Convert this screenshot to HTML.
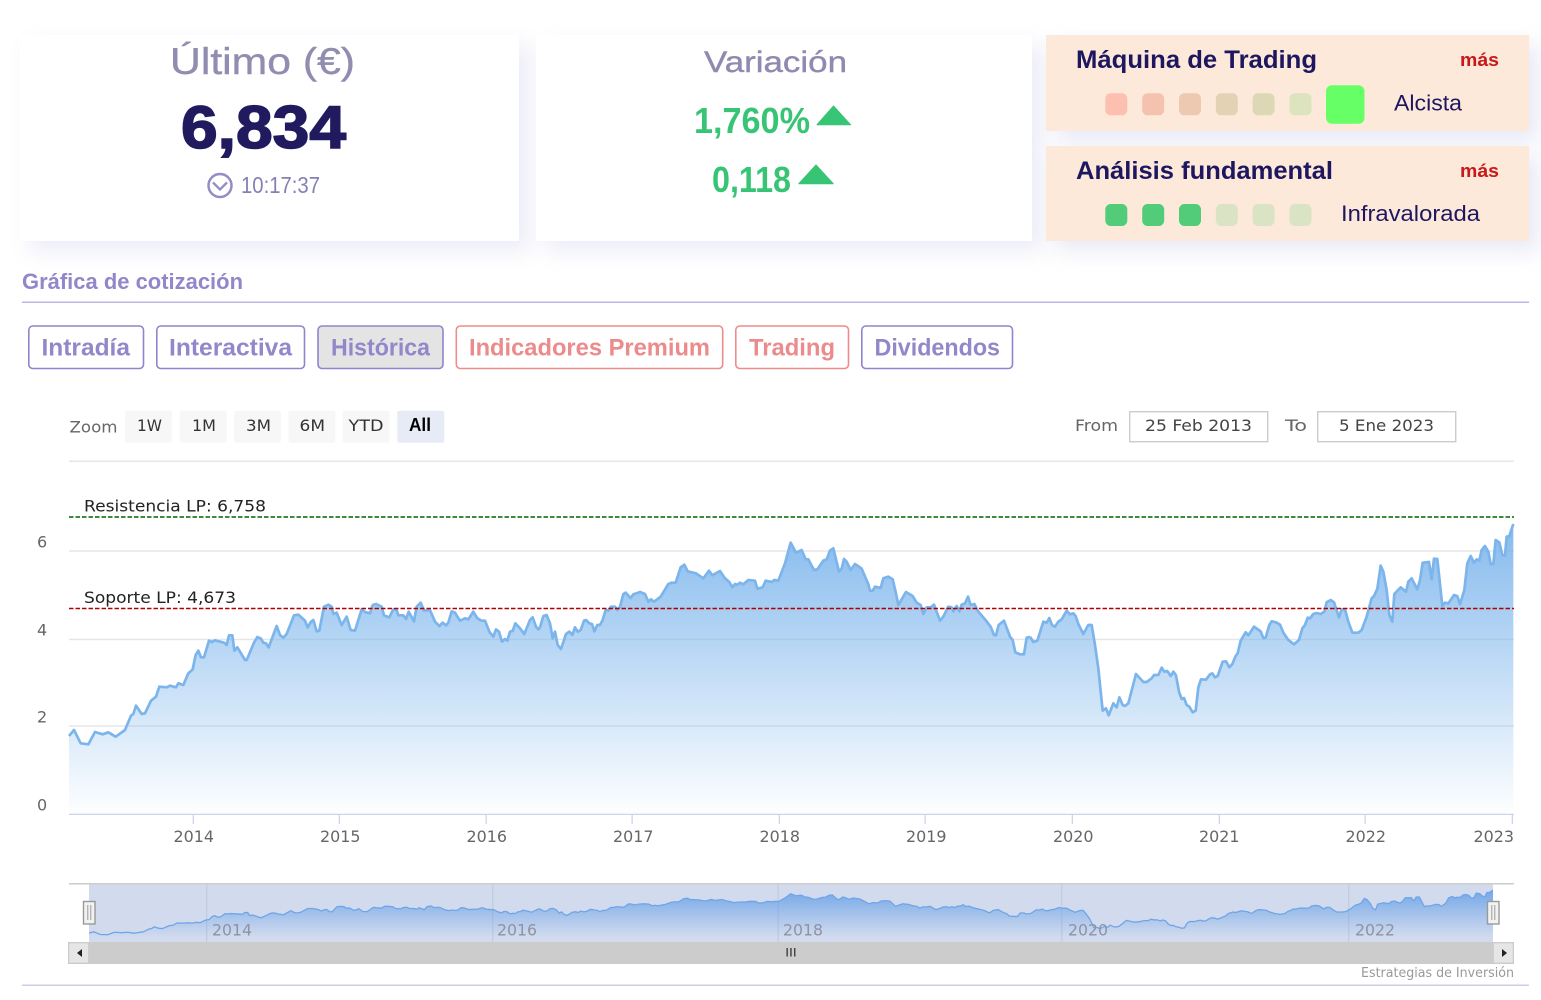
<!DOCTYPE html>
<html lang="es"><head><meta charset="utf-8"><title>Gráfica de cotización</title>
<style>
html,body{margin:0;padding:0;background:#fff;width:1541px;height:1000px;overflow:hidden}
.c{position:absolute;background:#fff;box-shadow:10px 10px 20px rgba(125,125,205,.15)}
.p{position:absolute;left:1046px;width:483px;background:#fde9d9;box-shadow:10px 10px 20px rgba(125,125,205,.17)}
svg{position:absolute;left:0;top:0}
.h{font-family:"Liberation Sans",sans-serif}
.d{font-family:"DejaVu Sans",sans-serif;font-size:16px}
</style></head><body>
<div class="c" style="left:20px;top:35px;width:499px;height:206px"></div>
<div class="c" style="left:536px;top:35px;width:496px;height:206px"></div>
<div class="p" style="top:35px;height:96px"></div>
<div class="p" style="top:146px;height:95px"></div>
<svg width="1541" height="1000" viewBox="0 0 1541 1000" xmlns="http://www.w3.org/2000/svg">
<defs>
<linearGradient id="gA" gradientUnits="userSpaceOnUse" x1="0" x2="0" y1="130" y2="985"><stop offset="0" stop-color="#7cb5ec" stop-opacity=".9"/><stop offset="1" stop-color="#7cb5ec" stop-opacity="0"/></linearGradient>
<linearGradient id="gB" gradientUnits="userSpaceOnUse" x1="0" x2="0" y1="100" y2="800"><stop offset="0" stop-color="#5c9ae6" stop-opacity=".8"/><stop offset="1" stop-color="#5c9ae6" stop-opacity="0"/></linearGradient>
<clipPath id="nc"><rect x="89" y="884" width="1404" height="58"/></clipPath>
<g id="fs">
<polygon transform="translate(50,490) scale(.33333)" points="57,973 57,738 72,720 92,760 115,763 135,726 158,733 175,727 197,740 225,720 243,677 250,672 258,647 275,672 285,670 303,632 318,620 328,590 350,592 360,587 378,592 385,580 400,585 415,550 428,538 437,495 445,482 453,502 462,502 477,452 485,456 495,451 522,458 530,465 537,436 547,436 553,482 562,472 585,510 590,510 612,458 622,441 632,445 640,458 648,460 656,472 680,408 690,435 700,443 710,432 732,376 745,374 765,392 773,412 783,395 790,390 800,424 808,422 822,350 835,344 845,350 850,372 860,368 875,405 890,380 902,420 915,422 935,358 945,366 960,370 968,345 978,342 995,350 1002,376 1018,382 1030,358 1040,360 1045,376 1060,376 1068,387 1076,365 1092,394 1100,350 1112,338 1122,362 1140,360 1155,395 1168,408 1178,398 1188,406 1195,398 1205,364 1215,368 1230,392 1245,385 1255,388 1270,365 1282,385 1295,392 1305,392 1318,425 1330,440 1338,418 1347,425 1356,455 1365,447 1372,452 1380,425 1388,423 1396,400 1410,415 1423,432 1440,390 1448,382 1458,410 1465,418 1470,412 1470,973"/>
<polygon transform="translate(540,490) scale(.33333)" points="0,973 0,412 10,378 20,375 30,400 38,445 45,425 53,465 63,477 78,432 88,425 97,435 105,412 113,425 122,420 132,392 138,390 148,400 156,402 163,424 172,405 180,405 188,390 197,360 205,362 213,350 225,350 232,360 240,350 250,312 257,308 272,324 280,313 300,306 315,312 325,335 333,328 342,335 362,320 385,282 395,278 407,278 422,232 433,224 443,244 468,250 490,265 507,242 517,256 540,243 555,265 568,276 577,292 585,282 592,284 600,278 610,283 625,270 645,272 652,296 668,292 677,272 695,276 703,270 715,272 735,220 752,158 768,188 785,180 797,208 805,208 822,240 832,238 850,212 860,208 870,182 880,175 897,245 905,236 912,207 920,215 932,240 945,222 965,236 985,283 990,302 998,302 1005,290 1022,294 1030,265 1045,260 1058,268 1068,310 1075,345 1085,328 1098,306 1118,318 1130,338 1142,345 1150,372 1160,352 1172,352 1182,344 1200,392 1210,380 1225,350 1235,352 1240,364 1250,348 1258,364 1265,344 1275,340 1284,320 1292,345 1303,342 1315,365 1335,388 1352,410 1362,435 1368,436 1376,405 1392,392 1410,440 1418,450 1426,487 1440,493 1452,493 1460,443 1470,441 1470,973"/>
<polygon transform="translate(1030,490) scale(.33333)" points="0,973 0,440 10,456 22,452 40,395 50,398 58,384 66,405 75,410 85,395 95,388 110,362 120,373 130,370 137,378 145,402 160,432 175,405 185,405 195,465 205,535 218,662 228,655 236,676 250,640 260,652 268,622 278,645 285,648 295,640 318,552 340,576 350,576 365,565 372,555 385,555 395,533 403,545 412,543 422,558 430,545 438,556 447,605 455,627 462,624 470,645 478,650 488,667 497,662 505,592 513,568 528,569 540,553 547,550 555,562 563,558 578,515 588,514 598,532 607,522 617,498 623,490 632,452 647,427 655,436 672,410 692,424 700,444 707,443 718,405 725,394 738,397 750,404 760,428 775,450 792,463 807,450 817,415 825,405 833,383 840,385 850,372 860,369 872,372 883,365 890,337 902,330 912,337 927,382 935,358 945,358 955,395 967,428 985,428 995,420 1010,380 1025,325 1032,318 1042,296 1052,227 1060,245 1070,300 1078,375 1087,395 1093,312 1112,292 1128,305 1135,275 1145,265 1162,298 1170,270 1178,218 1197,216 1205,268 1212,206 1222,207 1237,348 1245,338 1255,340 1272,315 1282,318 1290,343 1303,300 1312,220 1322,198 1332,218 1340,208 1348,212 1355,180 1365,168 1375,185 1382,222 1390,222 1397,150 1408,157 1417,195 1425,197 1430,140 1438,138 1450,102 1450,973"/>
</g>
<g id="ls" fill="none" stroke-linejoin="round">
<polyline vector-effect="non-scaling-stroke" transform="translate(50,490) scale(.33333)" points="57,738 72,720 92,760 115,763 135,726 158,733 175,727 197,740 225,720 243,677 250,672 258,647 275,672 285,670 303,632 318,620 328,590 350,592 360,587 378,592 385,580 400,585 415,550 428,538 437,495 445,482 453,502 462,502 477,452 485,456 495,451 522,458 530,465 537,436 547,436 553,482 562,472 585,510 590,510 612,458 622,441 632,445 640,458 648,460 656,472 680,408 690,435 700,443 710,432 732,376 745,374 765,392 773,412 783,395 790,390 800,424 808,422 822,350 835,344 845,350 850,372 860,368 875,405 890,380 902,420 915,422 935,358 945,366 960,370 968,345 978,342 995,350 1002,376 1018,382 1030,358 1040,360 1045,376 1060,376 1068,387 1076,365 1092,394 1100,350 1112,338 1122,362 1140,360 1155,395 1168,408 1178,398 1188,406 1195,398 1205,364 1215,368 1230,392 1245,385 1255,388 1270,365 1282,385 1295,392 1305,392 1318,425 1330,440 1338,418 1347,425 1356,455 1365,447 1372,452 1380,425 1388,423 1396,400 1410,415 1423,432 1440,390 1448,382 1458,410 1465,418 1470,412"/>
<polyline vector-effect="non-scaling-stroke" transform="translate(540,490) scale(.33333)" points="0,412 10,378 20,375 30,400 38,445 45,425 53,465 63,477 78,432 88,425 97,435 105,412 113,425 122,420 132,392 138,390 148,400 156,402 163,424 172,405 180,405 188,390 197,360 205,362 213,350 225,350 232,360 240,350 250,312 257,308 272,324 280,313 300,306 315,312 325,335 333,328 342,335 362,320 385,282 395,278 407,278 422,232 433,224 443,244 468,250 490,265 507,242 517,256 540,243 555,265 568,276 577,292 585,282 592,284 600,278 610,283 625,270 645,272 652,296 668,292 677,272 695,276 703,270 715,272 735,220 752,158 768,188 785,180 797,208 805,208 822,240 832,238 850,212 860,208 870,182 880,175 897,245 905,236 912,207 920,215 932,240 945,222 965,236 985,283 990,302 998,302 1005,290 1022,294 1030,265 1045,260 1058,268 1068,310 1075,345 1085,328 1098,306 1118,318 1130,338 1142,345 1150,372 1160,352 1172,352 1182,344 1200,392 1210,380 1225,350 1235,352 1240,364 1250,348 1258,364 1265,344 1275,340 1284,320 1292,345 1303,342 1315,365 1335,388 1352,410 1362,435 1368,436 1376,405 1392,392 1410,440 1418,450 1426,487 1440,493 1452,493 1460,443 1470,441"/>
<polyline vector-effect="non-scaling-stroke" transform="translate(1030,490) scale(.33333)" points="0,440 10,456 22,452 40,395 50,398 58,384 66,405 75,410 85,395 95,388 110,362 120,373 130,370 137,378 145,402 160,432 175,405 185,405 195,465 205,535 218,662 228,655 236,676 250,640 260,652 268,622 278,645 285,648 295,640 318,552 340,576 350,576 365,565 372,555 385,555 395,533 403,545 412,543 422,558 430,545 438,556 447,605 455,627 462,624 470,645 478,650 488,667 497,662 505,592 513,568 528,569 540,553 547,550 555,562 563,558 578,515 588,514 598,532 607,522 617,498 623,490 632,452 647,427 655,436 672,410 692,424 700,444 707,443 718,405 725,394 738,397 750,404 760,428 775,450 792,463 807,450 817,415 825,405 833,383 840,385 850,372 860,369 872,372 883,365 890,337 902,330 912,337 927,382 935,358 945,358 955,395 967,428 985,428 995,420 1010,380 1025,325 1032,318 1042,296 1052,227 1060,245 1070,300 1078,375 1087,395 1093,312 1112,292 1128,305 1135,275 1145,265 1162,298 1170,270 1178,218 1197,216 1205,268 1212,206 1222,207 1237,348 1245,338 1255,340 1272,315 1282,318 1290,343 1303,300 1312,220 1322,198 1332,218 1340,208 1348,212 1355,180 1365,168 1375,185 1382,222 1390,222 1397,150 1408,157 1417,195 1425,197 1430,140 1438,138 1450,102"/>
</g>
</defs>

<!-- top cards -->
<text class="h" x="170" y="74" font-size="37" fill="#918db0" stroke="#918db0" stroke-width=".4" textLength="185" lengthAdjust="spacingAndGlyphs">Último (€)</text>
<text class="h" x="181" y="148" font-size="60" font-weight="700" fill="#211a5e" stroke="#211a5e" stroke-width="1.600" textLength="165" lengthAdjust="spacingAndGlyphs">6,834</text>
<circle cx="220" cy="185.500" r="11.500" fill="none" stroke="#938dc6" stroke-width="2.500"/>
<path d="M213 182.500 L220 189.500 L227 182.500" fill="none" stroke="#938dc6" stroke-width="2.300"/>
<text class="h" x="241" y="193" font-size="23" fill="#8580b4" textLength="79" lengthAdjust="spacingAndGlyphs">10:17:37</text>

<text class="h" x="704" y="72" font-size="30" fill="#8f8bb0" stroke="#8f8bb0" stroke-width=".4" textLength="143" lengthAdjust="spacingAndGlyphs">Variación</text>
<text class="h" x="694" y="133" font-size="36" font-weight="700" fill="#37c575" textLength="116" lengthAdjust="spacingAndGlyphs">1,760%</text>
<polygon points="833.500,106 850.500,124.700 817,124.700" fill="#37c575" stroke="#37c575" stroke-width="1" stroke-linejoin="round"/>
<text class="h" x="712" y="192" font-size="36" font-weight="700" fill="#37c575" textLength="79" lengthAdjust="spacingAndGlyphs">0,118</text>
<polygon points="816,165 833.300,183.700 798.800,183.700" fill="#37c575" stroke="#37c575" stroke-width="1" stroke-linejoin="round"/>

<!-- right panels -->
<g class="h" font-size="25" font-weight="700" fill="#1d1760">
<text x="1076" y="68" textLength="241" lengthAdjust="spacingAndGlyphs">Máquina de Trading</text>
<text x="1076" y="179" textLength="257" lengthAdjust="spacingAndGlyphs">Análisis fundamental</text>
</g>
<g class="h" font-size="18" font-weight="700" fill="#c81818">
<text x="1460" y="66" textLength="39" lengthAdjust="spacingAndGlyphs">más</text>
<text x="1460" y="177" textLength="39" lengthAdjust="spacingAndGlyphs">más</text>
</g>
<g>
<rect x="1105.300" y="93.300" width="22" height="22" rx="5.500" fill="#fdc0b0"/>
<rect x="1142.200" y="93.300" width="22" height="22" rx="5.500" fill="#f6c2b0"/>
<rect x="1179" y="93.300" width="22" height="22" rx="5.500" fill="#ecc9b0"/>
<rect x="1215.800" y="93.300" width="22" height="22" rx="5.500" fill="#e4d2b5"/>
<rect x="1252.600" y="93.300" width="22" height="22" rx="5.500" fill="#dcd8b5"/>
<rect x="1289.500" y="93.300" width="22" height="22" rx="5.500" fill="#dce3bd"/>
<rect x="1326" y="85.300" width="38.500" height="38.500" rx="6" fill="#66ff66"/>
<rect x="1105.300" y="204" width="22" height="22" rx="5.500" fill="#52cc79"/>
<rect x="1142.200" y="204" width="22" height="22" rx="5.500" fill="#52cc79"/>
<rect x="1179" y="204" width="22" height="22" rx="5.500" fill="#52cc79"/>
<rect x="1215.800" y="204" width="22" height="22" rx="5.500" fill="#dbe3c5"/>
<rect x="1252.600" y="204" width="22" height="22" rx="5.500" fill="#dbe3c5"/>
<rect x="1289.500" y="204" width="22" height="22" rx="5.500" fill="#dbe3c5"/>
</g>
<g class="h" font-size="22" fill="#1d1760">
<text x="1394" y="110.500" textLength="68" lengthAdjust="spacingAndGlyphs">Alcista</text>
<text x="1341" y="221" textLength="139" lengthAdjust="spacingAndGlyphs">Infravalorada</text>
</g>

<!-- section -->
<text class="h" x="22" y="289" font-size="22" font-weight="700" fill="#9187c9" textLength="221" lengthAdjust="spacingAndGlyphs">Gráfica de cotización</text>
<rect x="22" y="301.500" width="1507" height="1.500" fill="#bcb6e4"/>
<g fill="none" stroke-width="1.600">
<rect x="28.800" y="326" width="114.700" height="42.500" rx="4" stroke="#8f85cc"/>
<rect x="156.800" y="326" width="147.700" height="42.500" rx="4" stroke="#8f85cc"/>
<rect x="318" y="326" width="125" height="42.500" rx="4" stroke="#8f85cc" fill="#e4e4e4"/>
<rect x="456.300" y="326" width="266.400" height="42.500" rx="4" stroke="#ee8c8c"/>
<rect x="735.800" y="326" width="112.700" height="42.500" rx="4" stroke="#ee8c8c"/>
<rect x="861.800" y="326" width="150.700" height="42.500" rx="4" stroke="#8f85cc"/>
</g>
<g class="h" font-size="24" font-weight="700" fill="#9187c9">
<text x="41.500" y="355.500" textLength="88.500" lengthAdjust="spacingAndGlyphs">Intradía</text>
<text x="169" y="355.500" textLength="123" lengthAdjust="spacingAndGlyphs">Interactiva</text>
<text x="331" y="355.500" textLength="99" lengthAdjust="spacingAndGlyphs">Histórica</text>
<text x="874.500" y="355.500" textLength="125.500" lengthAdjust="spacingAndGlyphs">Dividendos</text>
</g>
<g class="h" font-size="24" font-weight="700" fill="#ec8b8b">
<text x="469" y="355.500" textLength="241" lengthAdjust="spacingAndGlyphs">Indicadores Premium</text>
<text x="749" y="355.500" textLength="86" lengthAdjust="spacingAndGlyphs">Trading</text>
</g>

<!-- range selector -->
<text class="d" x="69.500" y="432.500" fill="#666" textLength="48" lengthAdjust="spacingAndGlyphs">Zoom</text>
<g fill="#f7f7f7">
<rect x="125" y="410.700" width="47" height="32" rx="2.500"/>
<rect x="179.700" y="410.700" width="47" height="32" rx="2.500"/>
<rect x="234" y="410.700" width="47" height="32" rx="2.500"/>
<rect x="288.300" y="410.700" width="47" height="32" rx="2.500"/>
<rect x="342.700" y="410.700" width="47" height="32" rx="2.500"/>
<rect x="397.300" y="410.700" width="47" height="32" rx="2.500" fill="#e6ebf5"/>
</g>
<g class="d" fill="#333">
<text x="137" y="431" textLength="25" lengthAdjust="spacingAndGlyphs">1W</text>
<text x="192" y="431" textLength="24" lengthAdjust="spacingAndGlyphs">1M</text>
<text x="246" y="431" textLength="25" lengthAdjust="spacingAndGlyphs">3M</text>
<text x="299.500" y="431" textLength="25.500" lengthAdjust="spacingAndGlyphs">6M</text>
<text x="348.500" y="431" textLength="35" lengthAdjust="spacingAndGlyphs">YTD</text>
</g>
<text class="h" x="409" y="431" font-size="18" font-weight="700" fill="#000" textLength="22" lengthAdjust="spacingAndGlyphs">All</text>
<text class="d" x="1075" y="431" fill="#666" textLength="43" lengthAdjust="spacingAndGlyphs">From</text>
<text class="d" x="1285" y="431" fill="#666" textLength="22" lengthAdjust="spacingAndGlyphs">To</text>
<rect x="1129.700" y="411.700" width="138" height="30" fill="#fff" stroke="#ccc" stroke-width="1.400"/>
<rect x="1317.700" y="411.700" width="138" height="30" fill="#fff" stroke="#ccc" stroke-width="1.400"/>
<text class="d" x="1145" y="431" fill="#444" textLength="107" lengthAdjust="spacingAndGlyphs">25 Feb 2013</text>
<text class="d" x="1339" y="431" fill="#444" textLength="95" lengthAdjust="spacingAndGlyphs">5 Ene 2023</text>
<rect x="69" y="460.500" width="1445" height="1.500" fill="#e6e6e6"/>

<!-- main chart -->
<g fill="#e6e6e6">
<rect x="69" y="550.300" width="1445" height="1.500"/>
<rect x="69" y="638.700" width="1445" height="1.500"/>
<rect x="69" y="725.300" width="1445" height="1.500"/>
</g>
<use href="#fs" fill="url(#gA)"/>
<use href="#ls" stroke="#7cb5ec" stroke-width="2.700"/>
<g fill="none" stroke-width="1.400" stroke-dasharray="4.500 2">
<line x1="69" x2="1514" y1="517" y2="517" stroke="#006400"/>
<line x1="69" x2="1514" y1="608.500" y2="608.500" stroke="#b00000"/>
</g>
<g class="d" fill="#222">
<text x="84" y="511.500" textLength="182" lengthAdjust="spacingAndGlyphs">Resistencia LP: 6,758</text>
<text x="84" y="603" textLength="152" lengthAdjust="spacingAndGlyphs">Soporte LP: 4,673</text>
</g>
<g fill="#ccd6eb">
<rect x="69" y="813.700" width="1445" height="1.300"/>
<rect x="192.700" y="814" width="1.300" height="10"/>
<rect x="338.700" y="814" width="1.300" height="10"/>
<rect x="485.500" y="814" width="1.300" height="10"/>
<rect x="631.500" y="814" width="1.300" height="10"/>
<rect x="778.700" y="814" width="1.300" height="10"/>
<rect x="924.500" y="814" width="1.300" height="10"/>
<rect x="1071.700" y="814" width="1.300" height="10"/>
<rect x="1218.700" y="814" width="1.300" height="10"/>
<rect x="1364.500" y="814" width="1.300" height="10"/>
<rect x="1511.700" y="814" width="1.300" height="10"/>
</g>
<g class="d" fill="#666">
<text x="37" y="547.500">6</text><text x="37" y="635.500">4</text><text x="37" y="722.500">2</text><text x="37" y="810.500">0</text>
<text x="173.500" y="842" textLength="40.500" lengthAdjust="spacingAndGlyphs">2014</text>
<text x="320" y="842" textLength="40.500" lengthAdjust="spacingAndGlyphs">2015</text>
<text x="466.500" y="842" textLength="40.500" lengthAdjust="spacingAndGlyphs">2016</text>
<text x="613" y="842" textLength="40.500" lengthAdjust="spacingAndGlyphs">2017</text>
<text x="759.500" y="842" textLength="40.500" lengthAdjust="spacingAndGlyphs">2018</text>
<text x="906" y="842" textLength="40.500" lengthAdjust="spacingAndGlyphs">2019</text>
<text x="1053" y="842" textLength="40.500" lengthAdjust="spacingAndGlyphs">2020</text>
<text x="1199" y="842" textLength="40.500" lengthAdjust="spacingAndGlyphs">2021</text>
<text x="1345.500" y="842" textLength="40.500" lengthAdjust="spacingAndGlyphs">2022</text>
<text x="1473.500" y="842" textLength="40.500" lengthAdjust="spacingAndGlyphs">2023</text>
</g>

<!-- navigator -->
<rect x="89" y="884" width="1404" height="58" fill="#d2dbee"/>
<rect x="69" y="883" width="1445" height="1.500" fill="#ccc"/>
<g fill="#c2cce2">
<rect x="206" y="884" width="1.400" height="58"/>
<rect x="492" y="884" width="1.400" height="58"/>
<rect x="777.500" y="884" width="1.400" height="58"/>
<rect x="1061" y="884" width="1.400" height="58"/>
<rect x="1348" y="884" width="1.400" height="58"/>
</g>
<g clip-path="url(#nc)">
<use href="#fs" fill="url(#gB)" transform="translate(21.910,783.330) scale(.9723,.2034)"/>
<use href="#ls" stroke="#6fa5e8" stroke-width="1.300" transform="translate(21.910,783.330) scale(.9723,.2034)"/>
</g>
<g class="d" fill="#8e93a3">
<text x="212" y="935.500" textLength="40" lengthAdjust="spacingAndGlyphs">2014</text>
<text x="497" y="935.500" textLength="40" lengthAdjust="spacingAndGlyphs">2016</text>
<text x="783" y="935.500" textLength="40" lengthAdjust="spacingAndGlyphs">2018</text>
<text x="1068" y="935.500" textLength="40" lengthAdjust="spacingAndGlyphs">2020</text>
<text x="1355" y="935.500" textLength="40" lengthAdjust="spacingAndGlyphs">2022</text>
</g>
<rect x="68" y="942" width="1446" height="22" fill="#ccc"/>
<rect x="68.700" y="942.700" width="20" height="20.500" fill="#e6e6e6" stroke="#ccc" stroke-width="1.300"/>
<rect x="1493.300" y="942.700" width="20" height="20.500" fill="#e6e6e6" stroke="#ccc" stroke-width="1.300"/>
<polygon points="82,949 82,957 77,953" fill="#222"/>
<polygon points="1502,949 1502,957 1507,953" fill="#222"/>
<g fill="#333"><rect x="786.500" y="948" width="1.300" height="8.500"/><rect x="790.300" y="948" width="1.300" height="8.500"/><rect x="794.100" y="948" width="1.300" height="8.500"/></g>
<rect x="83.500" y="901.500" width="11.500" height="22.500" fill="#f2f2f2" stroke="#999" stroke-width="1.400"/>
<path d="M87.800 905V920M90.800 905V920" stroke="#999" stroke-width="1"/>
<rect x="1487.500" y="901.500" width="11.500" height="22.500" fill="#f2f2f2" stroke="#999" stroke-width="1.400"/>
<path d="M1491.800 905V920M1494.800 905V920" stroke="#999" stroke-width="1"/>
<text class="d" x="1361" y="977" style="font-size:13.500px" fill="#999" textLength="153" lengthAdjust="spacingAndGlyphs">Estrategias de Inversión</text>
<rect x="22" y="984.500" width="1507" height="1.500" fill="#cfcbe9"/>
</svg>
</body></html>
